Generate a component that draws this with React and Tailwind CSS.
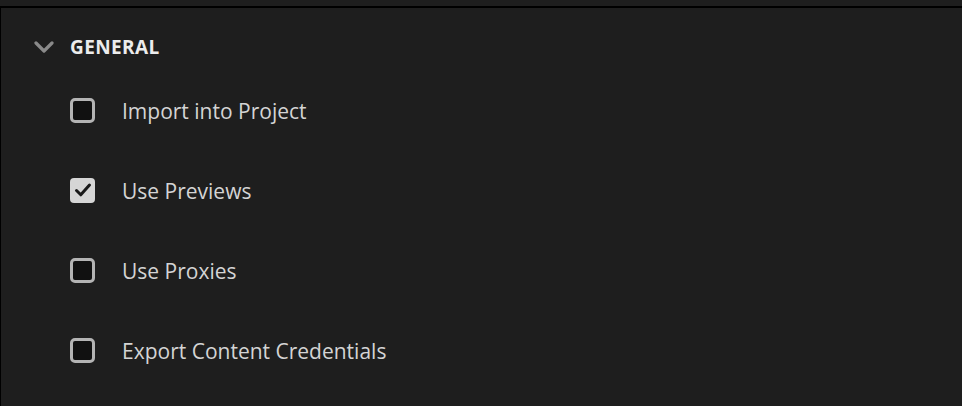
export default function App() {
  const items = [
    { label: "Import into Project", checked: false },
    { label: "Use Previews", checked: true },
    { label: "Use Proxies", checked: false },
    { label: "Export Content Credentials", checked: false },
  ];

  return (
    <div
      className="w-[962px] h-[406px] bg-[#1e1e1e] overflow-hidden flex flex-col"
      style={{ fontFamily: '"Open Sans", "Noto Sans", sans-serif' }}
    >
      <div className="h-[6px] bg-[#1e1e1e]" />
      <div className="h-[2px] bg-black" />
      <div className="flex-1 border-l border-black bg-[#1e1e1e]">
        {/* Section header */}
        <div className="flex items-center h-[62px] pt-[16px] pl-[33px]">
          <svg width="20" height="12" viewBox="0 0 20 12" className="text-[#8a8a8a]">
            <path
              d="M2 2 L10 10 L18 2"
              fill="none"
              stroke="currentColor"
              strokeWidth="3.2"
              strokeLinecap="round"
              strokeLinejoin="round"
            />
          </svg>
          <span className="ml-[16px] text-[19px] font-bold text-[#ececec] tracking-[0.4px]">
            GENERAL
          </span>
        </div>

        {/* Options */}
        <div className="flex flex-col pl-[69px]">
          {items.map((item) => (
            <div key={item.label} className="flex items-center h-[80px]">
              {item.checked ? (
                <div className="w-[25px] h-[25px] rounded-[4px] bg-[#d6d6d6] flex items-center justify-center">
                  <svg width="18" height="16" viewBox="0 0 18 16">
                    <path
                      d="M2.5 8.5 L6.8 12.8 L15.5 3"
                      fill="none"
                      stroke="#1a1a1a"
                      strokeWidth="3"
                      strokeLinecap="round"
                      strokeLinejoin="round"
                    />
                  </svg>
                </div>
              ) : (
                <div className="w-[25px] h-[25px] rounded-[5px] border-[3px] border-[#b4b4b4] bg-[#111111]" />
              )}
              <span className="ml-[27px] pt-[3px] text-[21px] text-[#d4d4d4] leading-none">
                {item.label}
              </span>
            </div>
          ))}
        </div>
      </div>
    </div>
  );
}
